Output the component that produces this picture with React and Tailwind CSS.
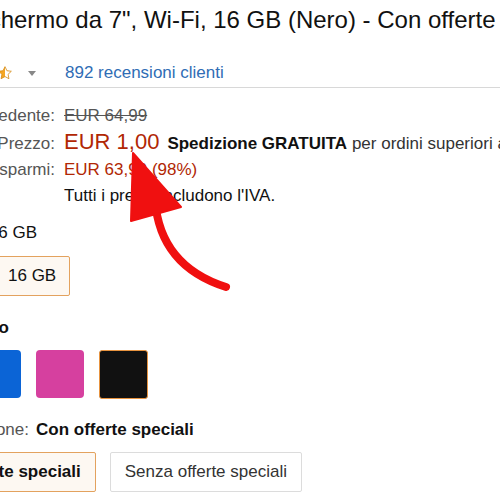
import React from 'react';

const RED = '#B12704';

const Star = ({ fill = 'full' }) => (
  <svg width="16" height="16" viewBox="0 0 24 24" className="shrink-0">
    <defs>
      <linearGradient id="half" x1="0" x2="1" y1="0" y2="0">
        <stop offset="50%" stopColor="#f5a623" />
        <stop offset="50%" stopColor="#fff" />
      </linearGradient>
    </defs>
    <path
      d="M12 2.5l2.9 6.1 6.6.8-4.9 4.6 1.3 6.6L12 17.3l-5.9 3.3 1.3-6.6-4.9-4.6 6.6-.8z"
      fill={fill === 'half' ? 'url(#half)' : '#f5a623'}
      stroke="#d4880f"
      strokeWidth="1.2"
      strokeLinejoin="round"
    />
  </svg>
);

const PriceRow = ({ label, children }) => (
  <>
    <span className="text-right text-[#555]">{label}</span>
    <span className="whitespace-nowrap">{children}</span>
  </>
);

export default function App() {
  return (
    <div className="relative w-[500px] h-[500px] overflow-hidden bg-white text-[#111] font-['Liberation_Sans',Arial,sans-serif] text-[17px]">
      {/* Title */}
      <h1 className="mt-[6px] -ml-[78px] whitespace-nowrap text-[24px] leading-[28px] font-normal">
        Fire, schermo da 7", Wi-Fi, 16 GB (Nero) - Con offerte speciali
      </h1>

      {/* Rating */}
      <div className="mt-[29px] flex items-center h-[20px]">
        <div className="flex justify-end w-[13px] gap-[1px]">
          <Star />
          <Star />
          <Star />
          <Star />
          <Star fill="half" />
        </div>
        <svg width="8" height="5" viewBox="0 0 8 5" className="ml-[15px]">
          <path d="M0 0h8L4 5z" fill="#888" />
        </svg>
        <a className="ml-[29px] text-[#2f6db5] whitespace-nowrap leading-[20px]">892 recensioni clienti</a>
      </div>
      <div className="mt-[4px] border-b border-[#d8d8d8]" />

      {/* Prices */}
      <div className="mt-[15px] -ml-[95px] grid grid-cols-[150px_1fr] gap-x-[9px] items-baseline leading-[26px]">
        <PriceRow label="Prezzo precedente:">
          <span className="line-through text-[#555]">EUR 64,99</span>
        </PriceRow>
        <PriceRow label="Prezzo:">
          <span className="text-[22px]" style={{ color: RED }}>EUR 1,00</span>
          <span className="ml-[8px] font-bold">Spedizione GRATUITA</span>
          <span className="text-[#333]"> per ordini superiori a EUR 29</span>
        </PriceRow>
        <PriceRow label="Risparmi:">
          <span style={{ color: RED }}>EUR 63,99 (98%)</span>
        </PriceRow>
        <PriceRow label="">
          <span>Tutti i prezzi includono l'IVA.</span>
        </PriceRow>
      </div>

      {/* Capacity */}
      <div className="mt-[11px] flex justify-end w-[37px] whitespace-nowrap leading-[26px]">
        <span className="text-[#555]">Capacità:&nbsp;</span>
        <span>16 GB</span>
      </div>
      <div className="mt-[10px] flex">
        <button className="-ml-[10px] h-[40px] pl-[17px] pr-[13px] border border-[#e3a25e] bg-[#fdf8f2] rounded-[2px] text-[17px] text-[#111]">
          16 GB
        </button>
      </div>

      {/* Colour */}
      <div className="mt-[19px] flex justify-end w-[9px] whitespace-nowrap leading-[26px]">
        <span className="text-[#555]">Colore:&nbsp;</span>
        <span className="font-bold">Nero</span>
      </div>
      <div className="mt-[9px] -ml-[27px] flex gap-[15px]">
        <div className="w-[48px] h-[48px] rounded-[4px] bg-[#0b64d6]" />
        <div className="w-[48px] h-[48px] rounded-[4px] bg-[#d6409f]" />
        <div className="w-[49px] h-[49px] rounded-[3px] bg-[#111] border border-[#e7933f]" />
      </div>

      {/* Configuration */}
      <div className="mt-[18px] flex items-baseline whitespace-nowrap leading-[26px]">
        <div className="flex justify-end w-[29px]">
          <span className="text-[#555]">Configurazione:</span>
        </div>
        <span className="ml-[7px] font-bold">Con offerte speciali</span>
      </div>
      <div className="mt-[9px] -ml-[92px] flex gap-[14px] whitespace-nowrap">
        <button className="h-[40px] px-[14px] border border-[#e3a25e] bg-[#fdf8f2] rounded-[2px] font-bold text-[#111]">
          Con offerte speciali
        </button>
        <button className="h-[40px] px-[14px] border border-[#dcdcdc] bg-white rounded-[2px] text-[#333]">
          Senza offerte speciali
        </button>
      </div>

      {/* Red arrow annotation */}
      <svg className="absolute inset-0 pointer-events-none" width="500" height="500" viewBox="0 0 500 500">
        <path d="M155 200 Q160 266 226 287" fill="none" stroke="#f01010" strokeWidth="8" strokeLinecap="round" />
        <polygon points="133,153 131,221 181,207" fill="#f01010" strokeLinejoin="round" stroke="#f01010" strokeWidth="2" />
      </svg>
    </div>
  );
}
